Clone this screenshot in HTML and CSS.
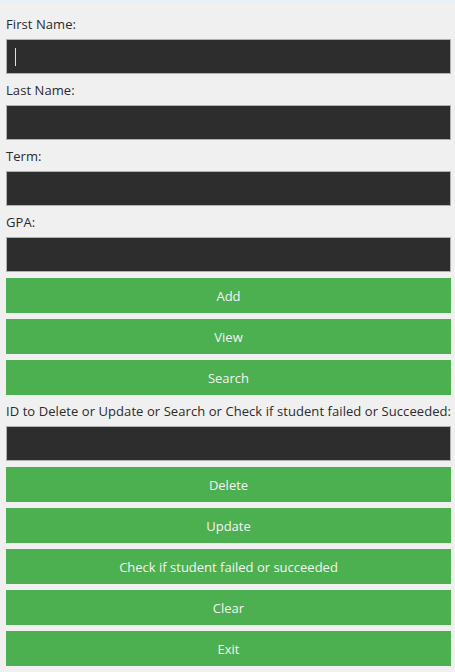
FILE: index.html
```html
<!DOCTYPE html>
<html>
<head>
<meta charset="utf-8">
<link rel="stylesheet" href="styles.css">
</head>
<body>
<div class="strip"></div>
<main class="form">
  <label class="lbl">First Name:</label>
  <div class="entry"><span class="caret"></span></div>
  <label class="lbl">Last Name:</label>
  <div class="entry"></div>
  <label class="lbl">Term:</label>
  <div class="entry"></div>
  <label class="lbl">GPA:</label>
  <div class="entry"></div>
  <button class="btn">Add</button>
  <button class="btn">View</button>
  <button class="btn">Search</button>
  <label class="lbl">ID to Delete or Update or Search or Check if student failed or Succeeded:</label>
  <div class="entry"></div>
  <button class="btn">Delete</button>
  <button class="btn">Update</button>
  <button class="btn">Check if student failed or succeeded</button>
  <button class="btn">Clear</button>
  <button class="btn">Exit</button>
</main>
</body>
</html>
```
FILE: styles.css
```css
html, body {
  margin: 0;
  padding: 0;
  background: #f0f0f0;
  height: 100%;
}
body {
  font-family: "Open Sans", "Noto Sans", sans-serif;
  font-size: 13px;
  color: #2b2b2b;
}
.strip {
  height: 4px;
  background: #e9f1f6;
}
.form {
  display: flex;
  flex-direction: column;
  padding: 4px 4px 6px 6px;
}
.lbl {
  display: block;
  box-sizing: border-box;
  height: 31px;
  padding-top: 2px;
  line-height: 29px;
  white-space: nowrap;
  letter-spacing: 0.07px;
}
.entry {
  box-sizing: border-box;
  height: 35px;
  background: #2d2d2d;
  border: 1px solid #b0b0b0;
  display: flex;
  align-items: center;
  padding-left: 8px;
}
.caret {
  display: inline-block;
  width: 1px;
  height: 18px;
  background: #e0e0e0;
}
.btn {
  box-sizing: border-box;
  height: 35px;
  margin-top: 6px;
  border: none;
  background: #4caf50;
  color: #f4f4f4;
  font-family: inherit;
  font-size: 13px;
  padding: 1px 0 0;
}
```
